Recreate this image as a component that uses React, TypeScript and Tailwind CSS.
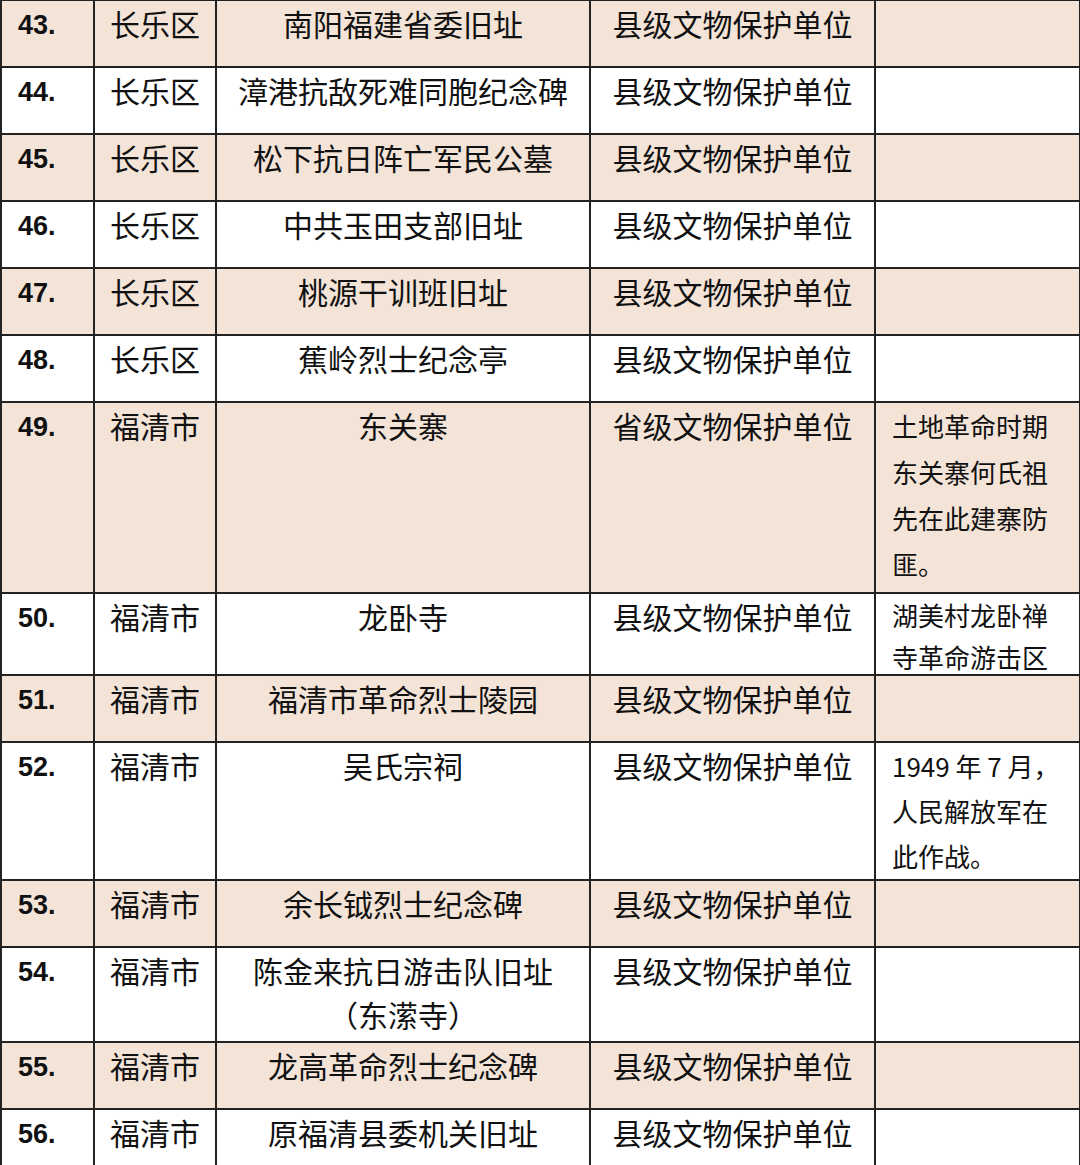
const rows = [
  { no: "43.", area: "长乐区", name: ["南阳福建省委旧址"], level: "县级文物保护单位", note: [], h: 67, lh: 46 },
  { no: "44.", area: "长乐区", name: ["漳港抗敌死难同胞纪念碑"], level: "县级文物保护单位", note: [], h: 67, lh: 46 },
  { no: "45.", area: "长乐区", name: ["松下抗日阵亡军民公墓"], level: "县级文物保护单位", note: [], h: 67, lh: 46 },
  { no: "46.", area: "长乐区", name: ["中共玉田支部旧址"], level: "县级文物保护单位", note: [], h: 67, lh: 46 },
  { no: "47.", area: "长乐区", name: ["桃源干训班旧址"], level: "县级文物保护单位", note: [], h: 67, lh: 46 },
  { no: "48.", area: "长乐区", name: ["蕉岭烈士纪念亭"], level: "县级文物保护单位", note: [], h: 67, lh: 46 },
  {
    no: "49.",
    area: "福清市",
    name: ["东关寨"],
    level: "省级文物保护单位",
    note: ["土地革命时期", "东关寨何氏祖", "先在此建寨防", "匪。"],
    h: 191,
    lh: 46,
  },
  {
    no: "50.",
    area: "福清市",
    name: ["龙卧寺"],
    level: "县级文物保护单位",
    note: ["湖美村龙卧禅", "寺革命游击区"],
    h: 81,
    lh: 42,
  },
  { no: "51.", area: "福清市", name: ["福清市革命烈士陵园"], level: "县级文物保护单位", note: [], h: 67, lh: 46 },
  {
    no: "52.",
    area: "福清市",
    name: ["吴氏宗祠"],
    level: "县级文物保护单位",
    note: ["1949 年 7 月，", "人民解放军在", "此作战。"],
    h: 138,
    lh: 45,
  },
  { no: "53.", area: "福清市", name: ["余长钺烈士纪念碑"], level: "县级文物保护单位", note: [], h: 67, lh: 46 },
  {
    no: "54.",
    area: "福清市",
    name: ["陈金来抗日游击队旧址", "（东潆寺）"],
    level: "县级文物保护单位",
    note: [],
    h: 95,
    lh: 46,
  },
  { no: "55.", area: "福清市", name: ["龙高革命烈士纪念碑"], level: "县级文物保护单位", note: [], h: 67, lh: 46 },
  { no: "56.", area: "福清市", name: ["原福清县委机关旧址"], level: "县级文物保护单位", note: [], h: 67, lh: 46 },
]

const cjk = { fontFamily: '"Noto Sans CJK SC", "Noto Sans", sans-serif' }
const num = { fontFamily: '"Liberation Sans", Arial, sans-serif' }

export default function App() {
  return (
    <div className="w-[1080px] h-[1165px] overflow-hidden bg-white text-[#111]" style={cjk}>
      <table className="table-fixed border-collapse w-[1079px] -mt-px">
        <colgroup>
          <col className="w-[93px]" />
          <col className="w-[122px]" />
          <col className="w-[374px]" />
          <col className="w-[285px]" />
          <col className="w-[205px]" />
        </colgroup>
        <tbody>
          {rows.map((r, i) => {
            const shaded = i % 2 === 0
            const bg = shaded ? "bg-[#f4e4d8]" : "bg-white"
            return (
              <tr key={r.no} className={bg} style={{ height: r.h }}>
                <td
                  className="border-2 border-[#222] align-top pl-4 pt-[2px] text-[27px] font-bold leading-[44px]"
                  style={num}
                >
                  {r.no}
                </td>
                <td className="border-2 border-[#222] align-top text-center text-[30px] leading-[44px]">
                  {r.area}
                </td>
                <td className="border-2 border-[#222] align-top text-center text-[30px] leading-[44px]">
                  {r.name.map((n) => (
                    <div key={n}>{n}</div>
                  ))}
                </td>
                <td className="border-2 border-[#222] align-top text-center text-[30px] leading-[44px]">
                  {r.level}
                </td>
                <td className="border-2 border-[#222] align-top pl-4 text-[26px]" style={{ lineHeight: `${r.lh}px` }}>
                  <div className="overflow-hidden" style={{ maxHeight: r.h - 1 }}>
                    {r.note.map((n) => (
                      <div key={n} className="whitespace-nowrap">
                        {n}
                      </div>
                    ))}
                  </div>
                </td>
              </tr>
            )
          })}
        </tbody>
      </table>
    </div>
  )
}
